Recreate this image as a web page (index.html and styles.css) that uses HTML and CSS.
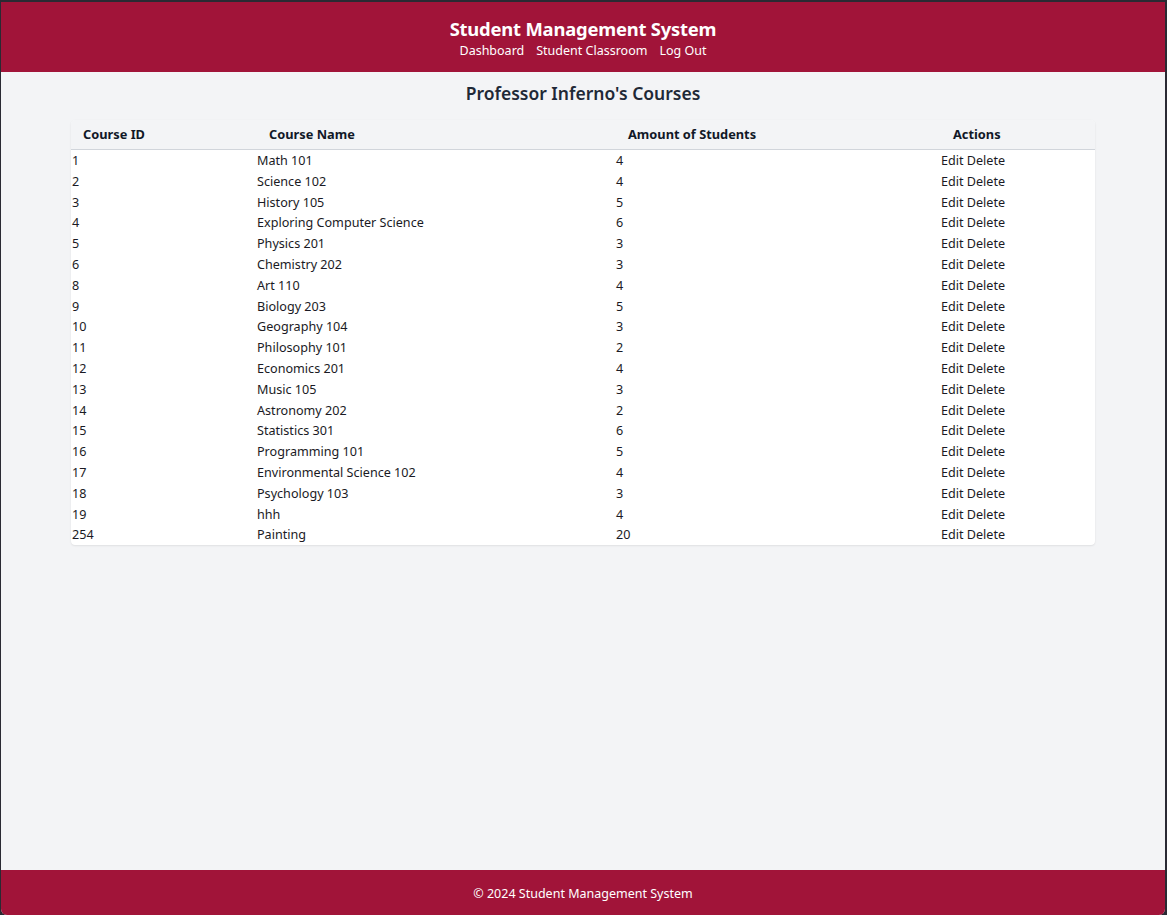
FILE: index.html
```html
<!DOCTYPE html>
<html lang="en">
<head>
<meta charset="utf-8">
<title>Student Management System</title>
<link rel="stylesheet" href="styles.css">
</head>
<body>
<div class="window">
  <header class="site-header">
    <h1 class="brand">Student Management System</h1>
    <nav class="nav">
      <a href="#">Dashboard</a>
      <a href="#">Student Classroom</a>
      <a href="#">Log Out</a>
    </nav>
  </header>
  <main class="main">
    <h2 class="page-title">Professor Inferno's Courses</h2>
    <div class="table-card">
      <table class="courses">
        <colgroup>
          <col class="c1"><col class="c2"><col class="c3"><col class="c4">
        </colgroup>
        <thead>
          <tr><th>Course ID</th><th>Course Name</th><th>Amount of Students</th><th>Actions</th></tr>
        </thead>
        <tbody>
          <tr><td>1</td><td>Math 101</td><td>4</td><td class="act">Edit Delete</td></tr>
          <tr><td>2</td><td>Science 102</td><td>4</td><td class="act">Edit Delete</td></tr>
          <tr><td>3</td><td>History 105</td><td>5</td><td class="act">Edit Delete</td></tr>
          <tr><td>4</td><td>Exploring Computer Science</td><td>6</td><td class="act">Edit Delete</td></tr>
          <tr><td>5</td><td>Physics 201</td><td>3</td><td class="act">Edit Delete</td></tr>
          <tr><td>6</td><td>Chemistry 202</td><td>3</td><td class="act">Edit Delete</td></tr>
          <tr><td>8</td><td>Art 110</td><td>4</td><td class="act">Edit Delete</td></tr>
          <tr><td>9</td><td>Biology 203</td><td>5</td><td class="act">Edit Delete</td></tr>
          <tr><td>10</td><td>Geography 104</td><td>3</td><td class="act">Edit Delete</td></tr>
          <tr><td>11</td><td>Philosophy 101</td><td>2</td><td class="act">Edit Delete</td></tr>
          <tr><td>12</td><td>Economics 201</td><td>4</td><td class="act">Edit Delete</td></tr>
          <tr><td>13</td><td>Music 105</td><td>3</td><td class="act">Edit Delete</td></tr>
          <tr><td>14</td><td>Astronomy 202</td><td>2</td><td class="act">Edit Delete</td></tr>
          <tr><td>15</td><td>Statistics 301</td><td>6</td><td class="act">Edit Delete</td></tr>
          <tr><td>16</td><td>Programming 101</td><td>5</td><td class="act">Edit Delete</td></tr>
          <tr><td>17</td><td>Environmental Science 102</td><td>4</td><td class="act">Edit Delete</td></tr>
          <tr><td>18</td><td>Psychology 103</td><td>3</td><td class="act">Edit Delete</td></tr>
          <tr><td>19</td><td>hhh</td><td>4</td><td class="act">Edit Delete</td></tr>
          <tr><td>254</td><td>Painting</td><td>20</td><td class="act">Edit Delete</td></tr>
        </tbody>
      </table>
    </div>
  </main>
  <footer class="site-footer">© 2024 Student Management System</footer>
</div>
</body>
</html>
```

FILE: styles.css
```css
* { box-sizing: border-box; }
html, body { margin: 0; padding: 0; height: 100%; }
body {
  background: #2a2a33;
  font-family: "Noto Sans", "Open Sans", sans-serif;
  color: #111827;
}
.window {
  display: flex;
  flex-direction: column;
  margin: 2px 2px 0 1px;
  height: calc(100vh - 2px);
  background: #f3f4f6;
  border-radius: 0 0 6px 6px;
  overflow: hidden;
}
.site-header {
  background: #a11439;
  color: #fff;
  height: 70px;
  display: flex;
  flex-direction: column;
  align-items: center;
  padding-top: 14px;
}
.brand {
  margin: 0;
  font-size: 18.4px;
  font-weight: 700;
  line-height: 26px;
  letter-spacing: -0.2px;
}
.nav {
  display: flex;
  gap: 12px;
  font-size: 12.5px;
  line-height: 17px;
  margin-top: 0;
}
.nav a { color: #fff; text-decoration: none; }
.main {
  flex: 1;
  display: flex;
  flex-direction: column;
  align-items: center;
  padding-top: 7px;
}
.page-title {
  margin: 0 0 13px;
  font-size: 17.5px;
  line-height: 28px;
  font-weight: 600;
  color: #1f2937;
}
.table-card {
  width: 1024px;
  background: #fff;
  border-radius: 4px;
  box-shadow: 0 1px 2px rgba(0,0,0,0.08), 0 0 1px rgba(0,0,0,0.06);
  overflow: hidden;
}
.courses {
  width: 100%;
  border-collapse: collapse;
  table-layout: fixed;
  font-size: 12.6px;
}
.c1 { width: 186px; }
.c2 { width: 359px; }
.c3 { width: 325px; }
.c4 { width: 154px; }
.courses thead tr {
  background: #f3f4f6;
  border-bottom: 1px solid #d1d5db;
}
.courses th {
  text-align: left;
  font-weight: 700;
  font-size: 12.8px;
  padding: 5px 12px;
  line-height: 19px;
  color: #111827;
}
.courses td {
  padding: 1px 0 0;
  line-height: 19.8px;
  color: #1a1a24;
}
.courses td:first-child { padding-left: 1px; }
.site-footer {
  background: #a11439;
  color: #fff;
  height: 45px;
  display: flex;
  align-items: center;
  justify-content: center;
  font-size: 12.5px;
  padding-top: 2px;
}
```
